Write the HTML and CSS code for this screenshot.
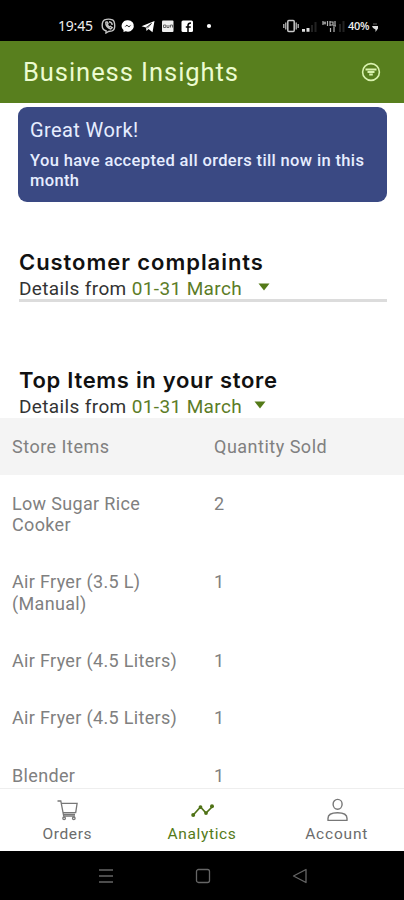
FILE: index.html
```html
<!DOCTYPE html>
<html lang="en">
<head>
<meta charset="utf-8">
<title>Business Insights</title>
<link rel="stylesheet" href="styles.css">
</head>
<body>
<div class="phone">
  <div class="status">
    <span class="clock">19:45</span>
    <svg class="notifications" width="120" height="16" viewBox="0 0 120 16">
      <g fill="none" stroke="#c4c4c4" stroke-width="1.4">
        <path d="M4.5 1.8Q8.500 .4 12.500 1.800Q14.700 2.800 14.700 8Q14.700 12 12 12.900L8.500 13.500L6 15V12.700Q2.200 12 2.200 7.500Q2.200 3 4.500 1.800Z"/>
        <path d="M5.800 4.200Q5.500 9 10.800 11L12.200 9.600L10.400 8.300L9.300 9Q7.600 7.500 7.400 6L8 5.200L7 3.800Z"/>
        <path d="M9 3.800Q12 4.200 12.200 7"/>
      </g>
      <path d="M28 2.200a6 5.700 0 1 1-2.300 11L23.500 14v-2A6 5.700 0 0 1 28 2.200Z" fill="#fff"/>
      <path d="M24.300 9.200l2.500-2.500 2 1.500 2.700-1.500-2.500 2.600-2-1.500Z" fill="#000"/>
      <path d="M41.500 8.200L54.500 3l-2 11.200-4-3.200-2 2-.5-3.500Z" fill="#fff"/>
      <path d="M46 9.600l5.500-4.200-4.300 5" stroke="#000" stroke-width=".7" fill="none"/>
      <rect x="62" y="2.500" width="11.500" height="11.500" rx="1" fill="#eee"/>
      <path d="M63.500 7h2.300v2.500h-2.300zM67 7v2.500h2V7M70.500 9.500V7h2v2.500" fill="none" stroke="#666" stroke-width="1"/>
      <rect x="81.500" y="2.500" width="11.500" height="11.500" rx="1.500" fill="#fff"/>
      <path d="M88 14V7.500q0-2.500 3-2.500M85.800 9h5" fill="none" stroke="#000" stroke-width="1.500"/>
      <circle cx="109" cy="8" r="2.100" fill="#fff"/>
    </svg>
    <svg class="signals" width="66" height="16" viewBox="0 0 66 16">
      <g fill="none" stroke="#c8c8c8" stroke-width="1.500">
        <rect x="4.800" y="2.500" width="6.400" height="11" rx="1"/>
        <path d="M2.800 4.500v7M13.200 4.500v7M.8 6v4M15.200 6v4" stroke-width="1.200"/>
      </g>
      <path d="M19 11h3v2.800h-3zM23.500 10h3v3.800h-3z" fill="#ddd"/>
      <path d="M28 7h2v7h-2zM31.500 4h2v10h-2zM56 6h2v8h-2zM59.500 3h2v11h-2z" fill="#222"/>
      <path d="M40 3v4M42 3.500v3M40 5h3M44.500 3v5M47 3v5M47 4h3v3h-3M52 3v5M50 8h3M47.500 10v4M51 9v5" fill="none" stroke="#b4b4b4" stroke-width="1.200"/>
    </svg>
    <span class="charge">40%</span>
    <svg class="battery" width="7" height="12" viewBox="0 0 7 12"><path d="M1 3h4v2H1zM3 1v2" fill="#333"/><path d="M0 6h6v2.500L3.500 12V9.500L1 8Z" fill="#ddd"/></svg>
  </div>
  <header class="appbar">
    <h1 class="title">Business Insights</h1>
    <svg class="filter" width="20" height="20" viewBox="0 0 20 20">
      <circle cx="10" cy="10" r="8.400" fill="none" stroke="#d9f2ae" stroke-width="1.600"/>
      <path d="M4.500 7.400h11M6.500 10h7M8.200 12.500h3.600" stroke="#d9f2ae" stroke-width="2"/>
    </svg>
  </header>
  <main class="content">
    <section class="notice">
      <h2 class="notice-title">Great Work!</h2>
      <p class="notice-text"><span class="notice-line">You have accepted all orders till now in this</span> month</p>
    </section>
    <section class="block complaints">
      <h2 class="heading heading-complaints">Customer complaints</h2>
      <div class="period">Details from <span class="dates">01-31 March</span><svg class="caret caret-wide" width="12" height="8" viewBox="0 0 12 8"><path d="M.5.5h11L6 7.500Z"/></svg></div>
    </section>
    <section class="block top-items">
      <h2 class="heading heading-items">Top Items in your store</h2>
      <div class="period">Details from <span class="dates">01-31 March</span><svg class="caret" width="12" height="8" viewBox="0 0 12 8"><path d="M.5.5h11L6 7.500Z"/></svg></div>
    </section>
    <div class="table">
      <div class="row head"><span>Store Items</span><span>Quantity Sold</span></div>
      <div class="row"><span>Low Sugar Rice<br>Cooker</span><span>2</span></div>
      <div class="row"><span>Air Fryer (3.5 L)<br>(Manual)</span><span>1</span></div>
      <div class="row"><span>Air Fryer (4.5 Liters)</span><span>1</span></div>
      <div class="row"><span>Air Fryer (4.5 Liters)</span><span>1</span></div>
      <div class="row"><span>Blender</span><span>1</span></div>
    </div>
  </main>
  <nav class="tabs">
    <div class="tab">
      <svg width="24" height="24" viewBox="0 0 24 24" fill="none" stroke="#777" stroke-width="1.300"><path d="M2.500 3h3.300l2.900 15.200H20M6.300 5.300h15.800l-1.400 9.300H8M8.300 16.500h11.700"/><circle cx="9.100" cy="20.300" r="1.300"/><circle cx="18.800" cy="20.300" r="1.300"/></svg>
      <span>Orders</span>
    </div>
    <div class="tab active">
      <svg width="24" height="24" viewBox="0 0 24 24" fill="#4f7216" stroke="#4f7216" stroke-width="1.700"><path d="M3 17.200L10.500 9l5.500 6L23 8" fill="none"/><g stroke="none"><circle cx="3.200" cy="17" r="2"/><circle cx="10.500" cy="9.100" r="1.900"/><circle cx="16" cy="15.100" r="1.900"/><circle cx="22" cy="8.300" r="2"/></g></svg>
      <span>Analytics</span>
    </div>
    <div class="tab">
      <svg width="24" height="24" viewBox="0 0 24 24" fill="none" stroke="#777" stroke-width="1.400"><ellipse cx="12.600" cy="6.300" rx="4.500" ry="4.900"/><path d="M3 22.400v-2.200q0-5.500 9.500-5.500t9.500 5.500v2.200Z" stroke-linejoin="round"/></svg>
      <span class="account">Account</span>
    </div>
  </nav>
  <div class="sysnav">
    <svg width="16" height="16" viewBox="0 0 16 16"><path d="M1 2h14M1 8h14M1 14h14"/></svg>
    <svg width="16" height="16" viewBox="0 0 16 16"><rect x="1.500" y="1.500" width="13" height="13" rx="2"/></svg>
    <svg width="16" height="16" viewBox="0 0 16 16"><path d="M14 1.500v13L1.500 8Z" stroke-linejoin="round"/></svg>
  </div>
</div>
</body>
</html>
```
FILE: styles.css
```css
* { box-sizing: border-box; }
body { margin: 0; background: #fff; font-family: Roboto, "Liberation Sans", sans-serif; }
h1, h2, p { margin: 0; }
svg { display: block; flex: none; }
.phone { width: 404px; height: 900px; display: flex; flex-direction: column; overflow: hidden; }
.status { height: 41px; flex: none; background: #000; color: #eee; display: flex; align-items: center; padding: 11px 0 0 58px; }
.clock { width: 42px; font-family: "Noto Sans", sans-serif; font-size: 14px; letter-spacing: -0.2px; line-height: 16px; }
.signals { margin-left: 63px; }
.charge { font-family: "Open Sans", sans-serif; font-size: 11px; font-weight: 600; letter-spacing: -0.3px; width: 22px; margin-left: -1px; line-height: 16px; }
.battery { margin-left: 2px; }
.appbar { height: 62px; flex: none; background: #587f1e; color: #ecfbd0; display: flex; align-items: center; justify-content: space-between; padding: 0 23px; }
.title { font-size: 25.5px; line-height: 30px; font-weight: 400; letter-spacing: 0.95px; }
.content { flex: 1; min-height: 0; overflow: hidden; padding-top: 4px; }
.notice { margin: 0 17px 0 18px; height: 95px; border-radius: 9px; background: #3a4983; color: #e6edff; padding: 11px 12px; }
.notice-title { font-size: 20px; line-height: 24px; font-weight: 400; letter-spacing: 0.4px; }
.notice-text { font-size: 16.5px; line-height: 20px; font-weight: 500; margin-top: 9px; letter-spacing: 0.36px; white-space: nowrap; }
.notice-line { display: block; }
.block { margin: 0 17px 0 19px; }
.complaints { margin-top: 47px; height: 53px; border-bottom: 3px solid #dcdcdc; }
.top-items { margin-top: 65px; height: 51px; }
.heading { font-family: Inter, Roboto, sans-serif; font-size: 22px; line-height: 26px; padding-top: 0; height: 27px; font-weight: 600; color: #111; white-space: nowrap; }
.heading-complaints { letter-spacing: 0.95px; }
.heading-items { letter-spacing: 0.7px; }
.period { display: flex; white-space: pre; font-size: 19px; line-height: 25px; color: #333; letter-spacing: 0.37px; }
.dates { color: #5c7c27; }
.caret { fill: #547a18; margin: 7px 0 0 12px; }
.caret-wide { margin-left: 16px; }
.row { display: grid; grid-template-columns: 202px 1fr; padding: 17.5px 12px 18.5px; font-size: 18px; line-height: 21.3px; color: #808080; letter-spacing: 0.33px; }
.head { background: #f4f4f4; letter-spacing: 0.5px; }
.tabs { height: 63px; flex: none; border-top: 1px solid #eee; background: #fff; display: grid; grid-template-columns: repeat(3, 1fr); }
.tab { display: flex; flex-direction: column; align-items: center; padding-top: 9px; font-size: 15.5px; line-height: 24px; color: #6c6c6c; letter-spacing: 0.65px; }
.active { color: #547a18; }
.account { letter-spacing: 0.8px; }
.sysnav { height: 49px; flex: none; background: #000; display: flex; justify-content: center; align-items: center; gap: 81px; padding-left: 1px; fill: none; stroke: #666; stroke-width: 1.3; }
```
